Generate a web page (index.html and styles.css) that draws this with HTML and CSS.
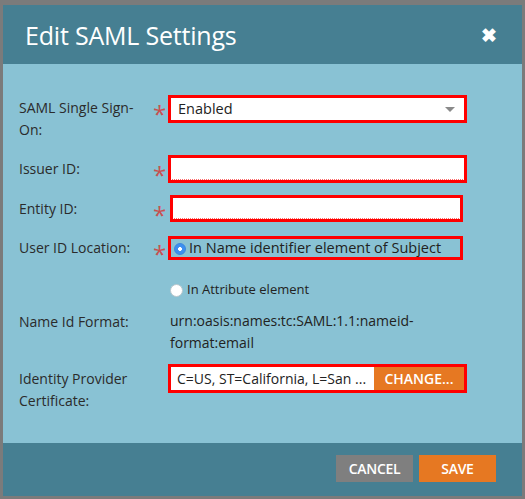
FILE: index.html
```html
<!DOCTYPE html>
<html>
<head>
<meta charset="utf-8">
<link rel="stylesheet" href="styles.css">
</head>
<body>
<div class="frame">
  <div class="dialog">
    <div class="header">
      <div class="title">Edit SAML Settings</div>
      <div class="close">&#x2716;</div>
    </div>
    <div class="body">
      <div class="row r1">
        <div class="label">SAML Single Sign-<br>On:</div>
        <div class="star">*</div>
        <div class="field select">
          <span>Enabled</span>
          <span class="arrow"></span>
        </div>
      </div>
      <div class="row r2 mid">
        <div class="label">Issuer ID:</div>
        <div class="star">*</div>
        <div class="field input"><span class="squiggle"></span></div>
      </div>
      <div class="row r3 mid">
        <div class="label">Entity ID:</div>
        <div class="star">*</div>
        <div class="field input narrow"><span class="squiggle"></span></div>
      </div>
      <div class="row r4 mid">
        <div class="label">User ID Location:</div>
        <div class="star">*</div>
        <div class="field radiobox">
          <span class="radio on"></span>
          <span>In Name identifier element of Subject</span>
        </div>
      </div>
      <div class="row r5">
        <div class="label"></div>
        <div class="nostar"></div>
        <div class="plainradio">
          <span class="radio"></span>
          <span>In Attribute element</span>
        </div>
      </div>
      <div class="row r6">
        <div class="label">Name Id Format:</div>
        <div class="nostar"></div>
        <div class="value">urn:oasis:names:tc:SAML:1.1:nameid-<br>format:email</div>
      </div>
      <div class="row r7">
        <div class="label">Identity Provider<br>Certificate:</div>
        <div class="nostar"></div>
        <div class="field cert">
          <span class="certtext">C=US, ST=California, L=San ...</span>
          <span class="change">CHANGE...</span>
        </div>
      </div>
    </div>
    <div class="footer">
      <div class="btn cancel">CANCEL</div>
      <div class="btn save">SAVE</div>
    </div>
  </div>
</div>
</body>
</html>
```
FILE: styles.css
```css
html, body {
  margin: 0;
  padding: 0;
}
body {
  width: 525px;
  height: 499px;
  overflow: hidden;
  font-family: "Open Sans", "Liberation Sans", sans-serif;
  color: #2b2b2b;
}
.frame {
  width: 525px;
  height: 499px;
  box-sizing: border-box;
  background: #7b7b7b;
  padding: 5px 3px 3px 3px;
}
.dialog {
  display: flex;
  flex-direction: column;
  height: 491px;
}
.header {
  height: 59px;
  background: #467f92;
  display: flex;
  align-items: center;
  justify-content: space-between;
  padding: 0 25px 0 22px;
  flex-shrink: 0;
}
.title {
  color: #ffffff;
  font-size: 25px;
  letter-spacing: -0.2px;
  margin-top: 1px;
}
.close {
  color: #ffffff;
  font-size: 19px;
  font-weight: bold;
  margin-top: 1px;
}
.body {
  height: 379px;
  background: #89c2d4;
  padding: 31px 0 0 16px;
  box-sizing: border-box;
  display: flex;
  flex-direction: column;
}
.row {
  display: grid;
  grid-template-columns: 131px 18px 299px;
  align-items: start;
  font-size: 14px;
  line-height: 22px;
}
.mid {
  align-items: center;
}
.label {
  padding-top: 1px;
}
.mid .label {
  padding-top: 0;
}
.star {
  color: #c9504f;
  font-size: 24px;
  line-height: 24px;
  height: 24px;
  padding-top: 11px;
  padding-left: 3px;
  box-sizing: border-box;
  overflow: visible;
  align-self: start;
}
.mid .star {
  align-self: center;
  padding-top: 6px;
}
.field {
  border: 3px solid #ff0000;
  box-sizing: border-box;
}
.select {
  height: 28px;
  background: #ffffff;
  display: flex;
  align-items: center;
  justify-content: space-between;
  padding: 0 9px 0 7px;
  font-size: 14.5px;
  color: #222;
}
.arrow {
  width: 0;
  height: 0;
  border-left: 5px solid transparent;
  border-right: 5px solid transparent;
  border-top: 5px solid #8a8a8a;
}
.r1 .label {
  padding-top: 2px;
}
.r1 .star {
  padding-top: 7px;
}
.r2 {
  margin-top: 14px;
}
.input {
  height: 28px;
  background: #ffffff;
  position: relative;
}
.narrow {
  height: 27px;
  width: 293px;
  margin-left: 2px;
}
.squiggle {
  position: absolute;
  left: 1px;
  right: 1px;
  bottom: 0;
  border-bottom: 1px dotted #ff6a6a;
}
.r3 {
  margin-top: 12px;
}
.r4 {
  margin-top: 14px;
}
.radiobox {
  height: 24px;
  width: 295px;
  display: flex;
  align-items: center;
  gap: 3px;
  padding-left: 3px;
  font-size: 14.5px;
  color: #222;
}
.radio {
  width: 12px;
  height: 12px;
  border-radius: 50%;
  background: #ffffff;
  border: 1px solid #b8c6cc;
  box-sizing: border-box;
  flex-shrink: 0;
  margin-top: 2px;
}
.radio.on {
  background: radial-gradient(circle, #ffffff 0, #ffffff 1.6px, #3d8ff0 2.2px);
  border: 1px solid #3a86e0;
}
.r5 {
  margin-top: 19px;
  line-height: 20px;
}
.plainradio {
  display: flex;
  align-items: center;
  gap: 4px;
  padding-left: 2px;
  font-size: 13px;
  color: #222;
}
.plainradio .radio {
  width: 13px;
  height: 13px;
}
.r6 {
  margin-top: 11px;
}
.value {
  padding-left: 2px;
  color: #222;
}
.r7 {
  margin-top: 10px;
}
.r7 .label {
  padding-top: 4px;
}
.cert {
  height: 29px;
  display: flex;
  background: #ffffff;
}
.certtext {
  flex: 1;
  padding-left: 6px;
  line-height: 23px;
  font-size: 14px;
  color: #222;
  white-space: nowrap;
  overflow: hidden;
}
.change {
  width: 90px;
  background: #e67822;
  color: #ffffff;
  font-weight: 600;
  font-size: 14px;
  text-align: center;
  line-height: 23px;
}
.footer {
  height: 53px;
  background: #467f92;
  display: flex;
  justify-content: flex-end;
  align-items: flex-start;
  gap: 6px;
  padding: 12px 26px 0 0;
  box-sizing: border-box;
}
.btn {
  width: 77px;
  height: 27px;
  color: #ffffff;
  font-size: 14px;
  font-weight: 600;
  line-height: 27px;
  text-align: center;
  letter-spacing: -0.3px;
}
.cancel {
  background: #7f7f7f;
}
.save {
  background: #e67822;
}
```
